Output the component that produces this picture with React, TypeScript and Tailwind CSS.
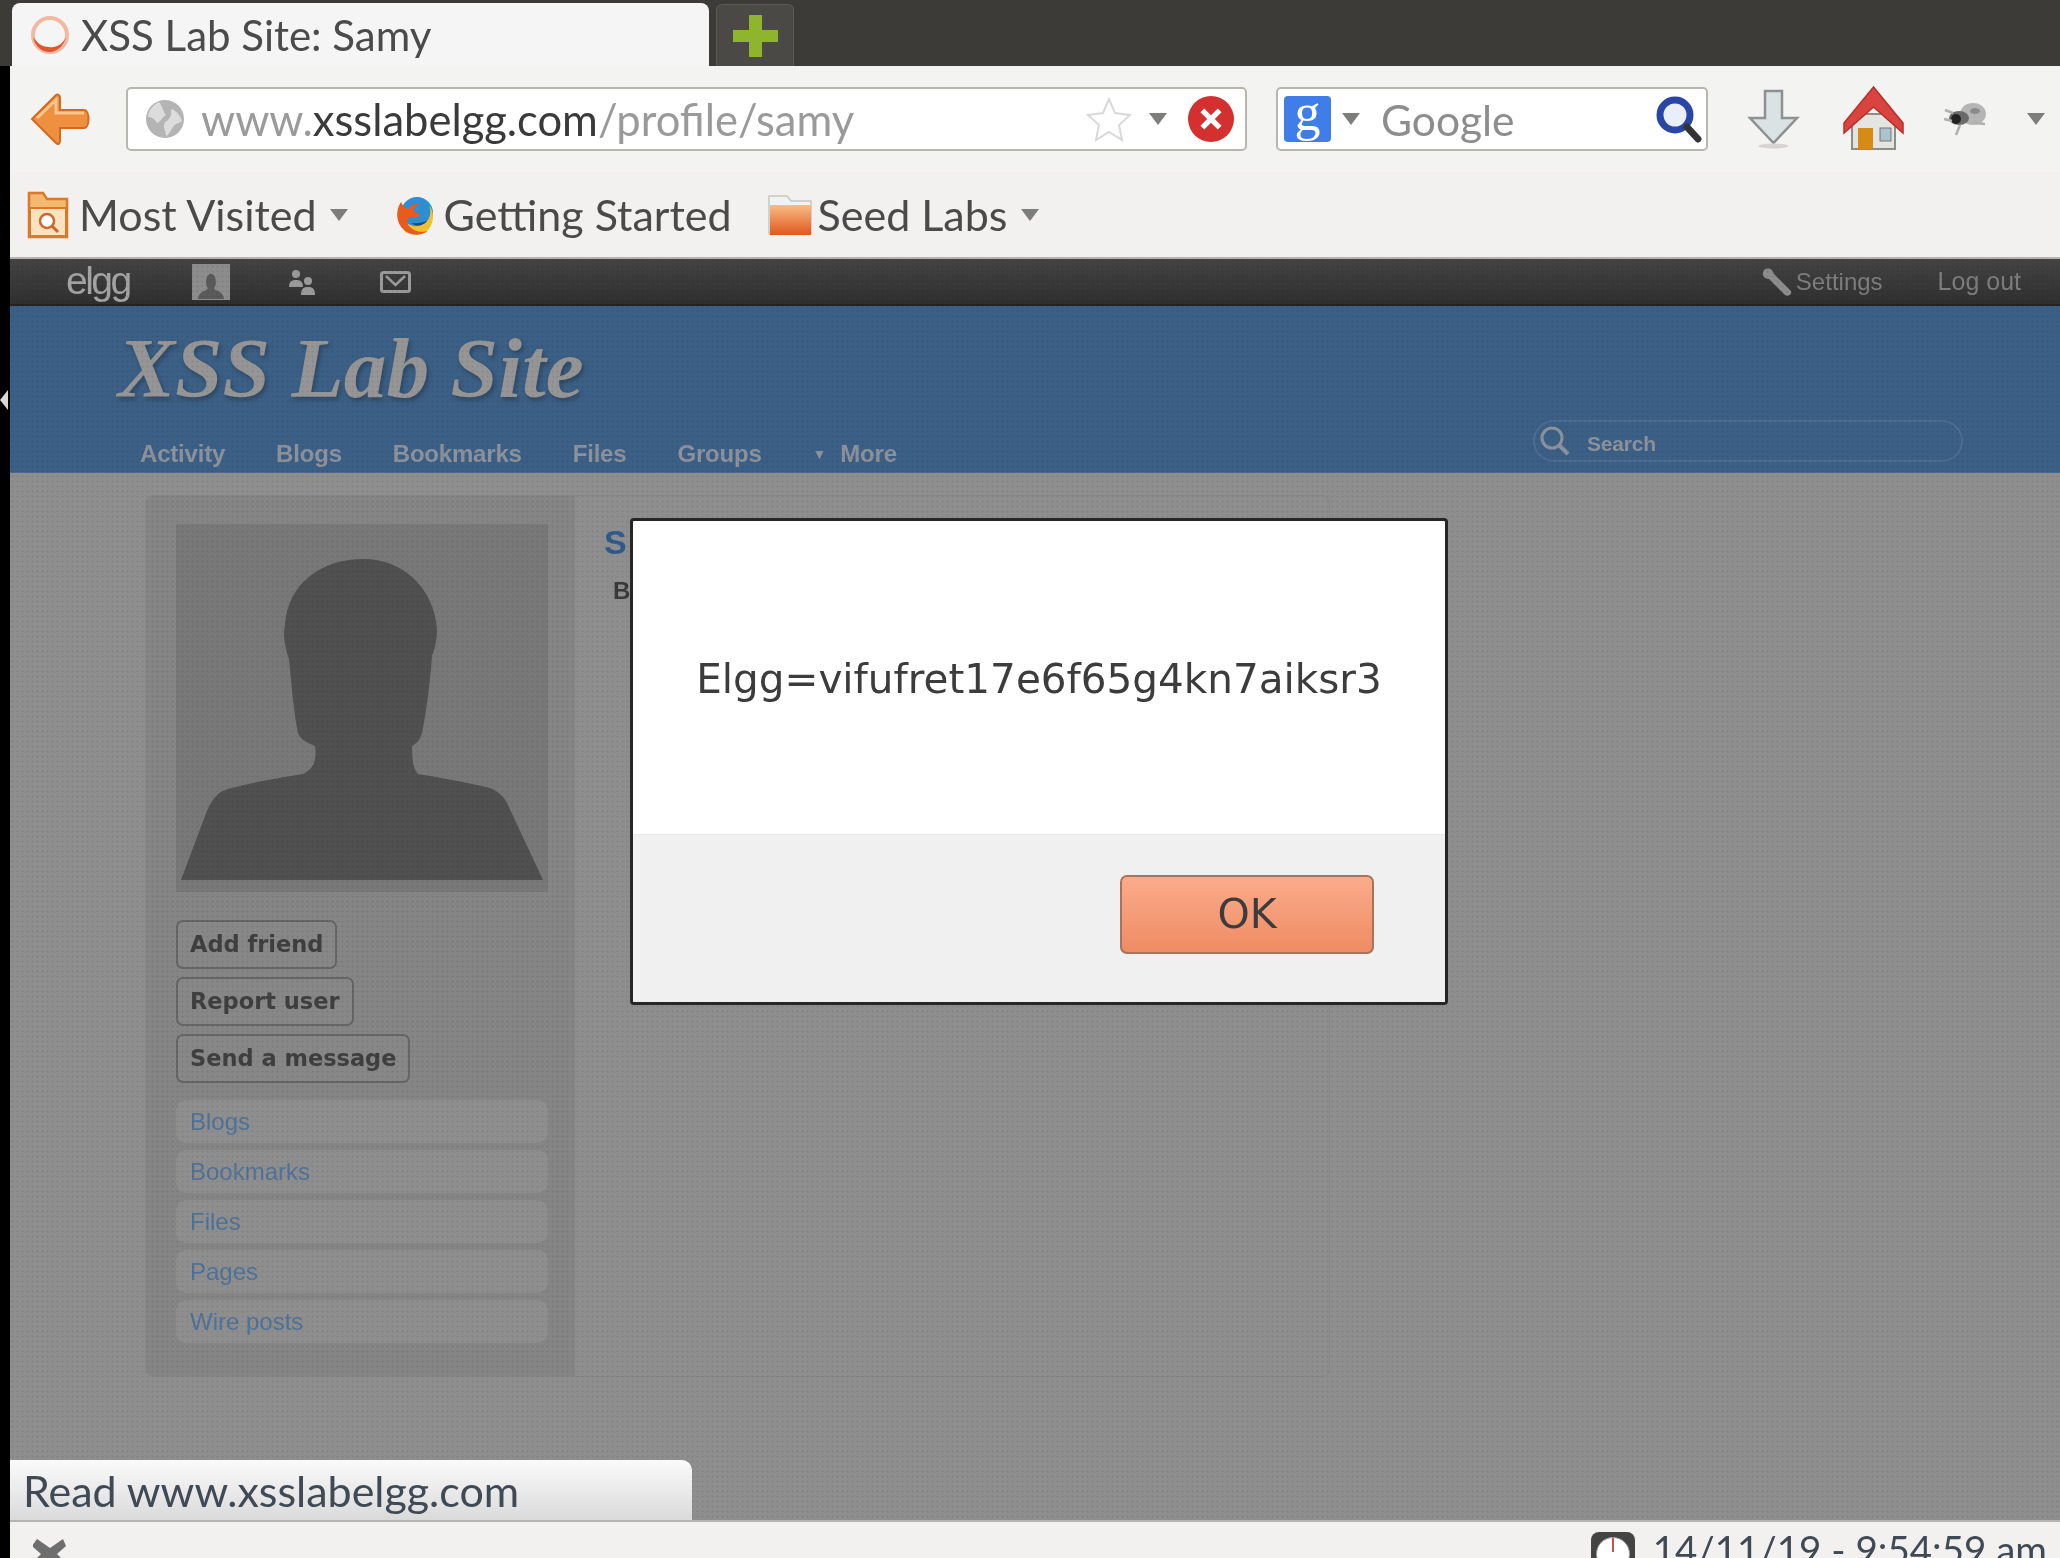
const Caret = ({ className = '' }: { className?: string }) => (
  <svg viewBox="0 0 20 14" className={`w-[20px] h-[14px] shrink-0 ${className}`}>
    <path d="M1 1h18l-9 12z" fill="#7d7d7b" />
  </svg>
);

const BackArrow = () => (
  <svg viewBox="0 0 63 53" className="w-[63px] h-[53px] shrink-0">
    <path d="M3 26 27 2c2-1 4 0 4 3v12h24c6 0 6 18 0 18H31v13c0 3-2 4-4 2z" fill="#ee9040" stroke="#d4691f" strokeWidth="2" />
    <path d="M8 25 27 7v13h28" fill="none" stroke="#f9c68d" strokeWidth="3" />
  </svg>
);

const Globe = () => (
  <svg viewBox="0 0 40 40" className="w-[40px] h-[40px] shrink-0">
    <circle cx="20" cy="20" r="19" fill="#b4b4b4" />
    <path d="M14 3c-6 3-11 9-11 15 5 0 7 3 9 6 4-1 5-6 9-8-3-3-3-8-7-13zM26 10c4 1 9 5 11 12-3 3-6 1-9 6-2 3-4 8-7 9 0-6-4-9-1-14 4-2 7-5 6-13z" fill="#dcdcdc" />
  </svg>
);

const FolderSearch = () => (
  <svg viewBox="0 0 42 48" className="w-[42px] h-[48px] shrink-0">
    <path d="M2 2h14l4 6h20v38H2z" fill="#f4b971" stroke="#d87a2a" strokeWidth="2.500" />
    <rect x="3" y="17" width="36" height="28" fill="#fbe3c0" stroke="#d87a2a" strokeWidth="2" />
    <circle cx="20" cy="30" r="7" fill="#fff" stroke="#d0662a" strokeWidth="2.500" />
    <path d="m25 35 6 6" stroke="#d0662a" strokeWidth="3" />
  </svg>
);

const Firefox = () => (
  <svg viewBox="0 0 41 44" className="w-[41px] h-[44px] shrink-0">
    <circle cx="22" cy="20" r="16" fill="#2f8ed2" />
    <path d="M12 30c6 5 16 4 21-3 3-5 3-10 1-15 6 8 5 18-1 25-7 6-17 6-24 1z" fill="#f4c02a" />
    <path d="M6 9C0 18 1 30 9 37c7 6 17 6 24 1-8 2-15 0-19-5-3-4-2-8 2-9 5 1 8 0 9-3-3-1-6-2-7-5 2-2 4-3 6-5-6 0-9 2-11 5-3-1-5-3-7-7z" fill="#e95a1c" />
    <path d="M16 30c5 4 12 3 16-2-3 1-10 3-16 2z" fill="#26447f" />
  </svg>
);

const OrangeFolder = () => (
  <svg viewBox="0 0 45 42" className="w-[45px] h-[42px] shrink-0">
    <defs>
      <linearGradient id="seedFolder" x1="0" y1="0" x2="0" y2="1">
        <stop offset="0" stopColor="#f8bd85" />
        <stop offset="1" stopColor="#e2561f" />
      </linearGradient>
    </defs>
    <path d="M1 2h18l4 5h20v33H1z" fill="#f4f2ee" stroke="#c9c6be" strokeWidth="1.500" />
    <path d="M2 11h41v30H2z" fill="url(#seedFolder)" />
  </svg>
);

const GoogleTile = () => (
  <div className="w-[47px] h-[46px] shrink-0 rounded-[4px] bg-[#3f7ee8] flex items-center justify-center font-['Liberation_Serif',serif] text-[52px] leading-none text-white pb-[12px]">
    g
  </div>
);

const Magnifier = () => (
  <svg viewBox="0 0 48 48" className="w-[48px] h-[48px] shrink-0">
    <circle cx="20" cy="20" r="15" fill="#e9eefb" stroke="#2a46a5" strokeWidth="7" />
    <path d="m32 32 11 12" stroke="#333" strokeWidth="7" strokeLinecap="round" />
  </svg>
);

const DownArrow = () => (
  <svg viewBox="0 0 53 60" className="w-[53px] h-[60px] shrink-0">
    <path d="M18 2h17v27h15L26.500 54 3 29h15z" fill="#dbe2e3" stroke="#8d9191" strokeWidth="2.500" />
    <ellipse cx="26.500" cy="57" rx="15" ry="2.500" fill="#d6d5d2" />
  </svg>
);

const Home = () => (
  <svg viewBox="0 0 63 66" className="w-[63px] h-[66px] shrink-0">
    <path d="M10 28h43v35H10z" fill="#e4e4e1" stroke="#8d8d88" strokeWidth="2" />
    <path d="M31.500 1 61 37v10L31.500 21 2 47V37z" fill="#d9453e" stroke="#b82f2a" strokeWidth="1.500" />
    <rect x="16" y="42" width="15" height="21" fill="#d58c16" />
    <rect x="38" y="42" width="11" height="13" fill="#a9c3cf" stroke="#777" />
  </svg>
);

const Bug = () => (
  <svg viewBox="0 0 45 36" className="w-[45px] h-[36px] shrink-0">
    <ellipse cx="30" cy="13" rx="13" ry="11" fill="#b5b5b5" />
    <ellipse cx="16" cy="17" rx="10" ry="7" fill="#6a6a6a" />
    <ellipse cx="13" cy="18" rx="5" ry="5" fill="#222222" />
    <ellipse cx="32" cy="10" rx="5" ry="3" fill="#8a8a8a" />
    <path d="M10 12 2 9M9 20 1 18M17 24l-4 10M32 22l10 1" stroke="#b0b0b0" strokeWidth="2.500" />
  </svg>
);

const siteMenu = ['Activity', 'Blogs', 'Bookmarks', 'Files', 'Groups'];
const ownerMenu = ['Blogs', 'Bookmarks', 'Files', 'Pages', 'Wire posts'];
const actions = ['Add friend', 'Report user', 'Send a message'];

export default function App() {
  return (
    <div className="relative w-[2060px] h-[1558px] overflow-hidden flex flex-col bg-black pl-[10px] font-['Lato',sans-serif] blur-[0.7px]">
      {/* Tab strip */}
      <div className="-ml-[10px] h-[66px] shrink-0 bg-[#3c3b37] flex items-end pl-[12px]">
        <div className="w-[697px] h-[63px] rounded-t-[8px] bg-[#f5f5f5] flex items-center pl-[16px] gap-[9px]">
          <svg viewBox="0 0 44 44" className="w-[44px] h-[44px] shrink-0">
            <circle cx="22" cy="22" r="17" fill="none" stroke="#f3b9a0" strokeWidth="4" />
            <path d="M5 24c2 10 10 16 18 15 7-1 13-7 15-15-4 8-10 11-17 10-7 0-12-4-16-10z" fill="#e2562b" />
          </svg>
          <span className="text-[42px] leading-none text-[#4b4b4b] whitespace-nowrap">XSS Lab Site: Samy</span>
        </div>
        <div className="ml-[7px] w-[78px] h-[62px] rounded-t-[6px] bg-[#4a4945] border border-b-0 border-[#5a5955] flex items-center justify-center">
          <svg viewBox="0 0 45 42" className="w-[45px] h-[42px]">
            <path d="M16 0h13v15h16v12H29v15H16V27H0V15h16z" fill="#8fb42e" />
          </svg>
        </div>
      </div>

      {/* Navigation toolbar */}
      <div className="h-[106px] shrink-0 bg-[#f3f3f2] flex items-center">
        <div className="ml-[19px]"><BackArrow /></div>
        <div className="ml-[34px] w-[1121px] h-[64px] rounded-[5px] border-2 border-[#b8b6af] bg-white flex items-center pl-[17px] pr-[11px]">
          <Globe />
          <span className="ml-[16px] pt-[2px] text-[43.500px] leading-none text-[#9a9a9a] whitespace-nowrap">
            www.<span className="text-[#3a3a3a]">xsslabelgg.com</span>/profile/samy
          </span>
          <svg viewBox="0 0 46 46" className="w-[46px] h-[46px] ml-auto shrink-0">
            <path d="m23 3 6 14 15 2-11 10 3 15-13-8-13 8 3-15L2 19l15-2z" fill="#fff" stroke="#d9d9d9" strokeWidth="2" />
          </svg>
          <Caret className="ml-[16px]" />
          <div className="ml-[20px] w-[46px] h-[46px] rounded-full bg-[#d3302f] flex items-center justify-center shrink-0">
            <svg viewBox="0 0 24 24" className="w-[26px] h-[26px]">
              <path d="m4 4 16 16M20 4 4 20" stroke="#fff" strokeWidth="5" />
            </svg>
          </div>
        </div>
        <div className="ml-[29px] w-[432px] h-[64px] rounded-[5px] border-2 border-[#b8b6af] bg-white flex items-center pl-[6px] pr-[3px]">
          <GoogleTile />
          <Caret className="ml-[10px]" />
          <span className="ml-[20px] pt-[2px] text-[42.500px] leading-none text-[#8d8d8d]">Google</span>
          <div className="ml-auto"><Magnifier /></div>
        </div>
        <div className="ml-[39px]"><DownArrow /></div>
        <div className="ml-[42px]"><Home /></div>
        <div className="ml-[38px]"><Bug /></div>
        <Caret className="ml-[38px]" />
      </div>

      {/* Bookmarks toolbar */}
      <div className="h-[87px] shrink-0 bg-[#f2f1f0] border-b-2 border-[#b4b3b0] flex items-center text-[43px] leading-none text-[#4a4a4a] whitespace-nowrap">
        <div className="ml-[17px]"><FolderSearch /></div>
        <span className="ml-[10px]">Most Visited</span>
        <Caret className="ml-[12px]" />
        <div className="ml-[46px]"><Firefox /></div>
        <span className="ml-[8px]">Getting Started</span>
        <div className="ml-[36px]"><OrangeFolder /></div>
        <span className="ml-[5px]">Seed Labs</span>
        <Caret className="ml-[13px]" />
      </div>

      {/* Elgg top bar */}
      <div className="h-[47px] shrink-0 bg-gradient-to-b from-[#444444] to-[#2f2f2f] border-b-2 border-[#232323] flex items-center font-['Liberation_Sans',sans-serif] text-[#7d7d7d]">
        <span className="ml-[56px] w-[66px] text-[39px] leading-none tracking-[-2.500px] text-[#a3a3a3] pb-[3px]">elgg</span>
        <div className="ml-[60px] w-[38px] h-[36px] bg-[#8c8c8c] flex items-end justify-center overflow-hidden">
          <svg viewBox="0 0 30 32" className="w-[28px] h-[32px]">
            <path d="M1 32c1-7 6-8 10-10 1-2 0-3-1-5-1-6 1-12 5-12s6 6 5 12c-1 2-2 3-1 5 4 2 9 3 10 10z" fill="#5a5a5a" />
          </svg>
        </div>
        <svg viewBox="0 0 30 26" className="ml-[57px] w-[30px] h-[26px]">
          <circle cx="9" cy="5" r="4" fill="#9a9a9a" />
          <path d="M2 18c0-6 3-7 7-7s7 1 7 7z" fill="#9a9a9a" />
          <circle cx="21" cy="12" r="4" fill="#9a9a9a" />
          <path d="M14 26c0-7 3-8 7-8s7 1 7 8z" fill="#9a9a9a" />
        </svg>
        <svg viewBox="0 0 31 22" className="ml-[63px] w-[31px] h-[22px]">
          <rect x="1.500" y="1.500" width="28" height="19" rx="2" fill="none" stroke="#9a9a9a" strokeWidth="3" />
          <path d="m6 5 9.500 9L25 5" fill="none" stroke="#9a9a9a" strokeWidth="2.500" />
        </svg>
        <svg viewBox="0 0 33 30" className="ml-auto w-[33px] h-[30px]">
          <path d="M3 3c4-3 9-1 10 4l17 17c1 4-3 6-6 4L8 12C3 12 0 8 3 3z" fill="#8c8c8c" />
        </svg>
        <span className="ml-[2px] text-[24px]">Settings</span>
        <span className="ml-[55px] mr-[39px] text-[25px]">Log out</span>
      </div>

      {/* Site header */}
      <div className="h-[167px] shrink-0 bg-[#3c5f85] border-b border-[#4a6a8c] flex flex-col">
        <div className="pl-[108px] pt-[20px] font-['Liberation_Serif',serif] font-bold italic text-[85.500px] leading-none text-[#959595] [text-shadow:2px_3px_4px_#2f4863]">
          XSS Lab Site
        </div>
        <div className="flex-1 flex items-end justify-between font-['Liberation_Sans',sans-serif] font-bold text-[24px] leading-[28px] tracking-[-0.2px] text-[#8c929b]">
          <div className="flex items-center pl-[130px] pb-[4px] gap-[51px]">
            {siteMenu.map((item) => (
              <span key={item}>{item}</span>
            ))}
            <span className="flex items-center gap-[14px]">
              <span className="text-[14px]">▼</span>
              More
            </span>
          </div>
          <div className="mr-[97px] mb-[10px] w-[430px] h-[42px] rounded-[21px] border-2 border-[#4c6d90] flex items-center pl-[4px] text-[#8c929b]">
            <svg viewBox="0 0 32 32" className="w-[32px] h-[32px]">
              <circle cx="13" cy="13" r="10" fill="none" stroke="#8c929b" strokeWidth="3" />
              <path d="m20 20 9 9" stroke="#8c929b" strokeWidth="4" />
            </svg>
            <span className="ml-[16px] pt-[6px] text-[21px]">Search</span>
          </div>
        </div>
      </div>

      {/* Page body under the alert backdrop */}
      <div className="flex-1 bg-[#8e8e8e] pl-[135px] pt-[22px] font-['Liberation_Sans',sans-serif]">
        <div className="w-[1185px] h-[882px] rounded-[8px] border border-[#878787] flex overflow-hidden">
          <div className="w-[429px] shrink-0 bg-[#858585] pl-[30px] pr-[26px] pt-[28px]">
            <div className="w-[372px] h-[368px] bg-[#787878] overflow-hidden">
              <svg viewBox="0 0 372 368" className="w-[372px] h-[368px]">
                <path
                  d="M5 356 29 292C34 278 40 270 47 267 57 262 100 254 127 250 137 245 141 238 139 222 130 218 124 215 122 209 118 190 116 165 113 135 108 120 107 110 109 100 112 60 145 35 187 35 228 35 258 65 261 105 261 115 259 125 256 132 254 160 250 190 246 209 244 216 240 220 236 222 236 235 237 245 242 250 260 253 290 258 314 264 322 267 328 273 331 279L367 356Z"
                  fill="#505050"
                />
              </svg>
            </div>
            <div className="mt-[28px] flex flex-col items-start gap-[8px]">
              {actions.map((label) => (
                <div
                  key={label}
                  className="h-[49px] px-[12px] rounded-[7px] border-2 border-[#666666] bg-[#878787] flex items-center font-['DejaVu_Sans',sans-serif] font-bold text-[22.500px] leading-none text-[#3f3f3f] whitespace-nowrap"
                >
                  {label}
                </div>
              ))}
            </div>
            <div className="mt-[17px] w-[372px] flex flex-col gap-[7px]">
              {ownerMenu.map((label) => (
                <div key={label} className="h-[43px] rounded-[10px] bg-[#8e8e8e] pl-[14px] flex items-center text-[24px] leading-none text-[#4f7298]">
                  {label}
                </div>
              ))}
            </div>
          </div>
          <div className="flex-1 pl-[29px] pt-[27px]">
            <div className="text-[34px] leading-[38px] tracking-[5px] font-bold text-[#2f5a8b]">Samy</div>
            <div className="mt-[15px] pl-[9px] text-[24px] leading-[30px] tracking-[6px] font-bold text-[#3a3a3a]">Brief</div>
          </div>
        </div>
      </div>

      {/* Status bar */}
      <div className="h-[38px] shrink-0 bg-[#f2f1f0] border-t-2 border-[#b3b2af] flex overflow-hidden">
        <svg viewBox="0 0 34 34" className="ml-[23px] mt-[14px] w-[34px] h-[34px] shrink-0">
          <path d="M4 3 17 12 30 3l3 7-9 8 9 9-5 6-12-9-12 9-5-6 9-9-9-8z" fill="#6e6e6e" />
        </svg>
        <div className="ml-auto mt-[10px] w-[44px] h-[44px] rounded-[8px] bg-[#444444] flex items-center justify-center shrink-0">
          <div className="w-[34px] h-[34px] rounded-full bg-white border border-[#999999] flex justify-center">
            <div className="w-[2px] h-[14px] bg-[#c9524a]" />
          </div>
        </div>
        <span className="ml-[18px] mr-[13px] mt-[8px] text-[38.500px] leading-none text-[#3f4a55] whitespace-nowrap">14/11/19 - 9:54:59 am</span>
      </div>

      {/* Backdrop dither */}
      <div className="absolute left-[10px] right-0 top-[259px] bottom-[38px] pointer-events-none opacity-10 bg-[radial-gradient(#000000_25%,transparent_30%)] bg-[length:5px_5px]" />

      {/* Sidebar collapse notch on the window edge */}
      <div className="absolute left-0 top-[390px] w-0 h-0 border-y-[10px] border-y-transparent border-r-[8px] border-r-[#d8d8d8]" />

      {/* Link status tooltip */}
      <div className="absolute left-[10px] top-[1460px] w-[682px] h-[60px] rounded-tr-[10px] bg-gradient-to-b from-[#fbfbfb] to-[#dadada] flex items-center pl-[13px] text-[43px] leading-none text-[#3f4a55] whitespace-nowrap">
        Read www.xsslabelgg.com
      </div>

      {/* Alert dialog */}
      <div className="absolute left-[630px] top-[518px] w-[818px] h-[487px] rounded-[4px] border-[3px] border-[#262626] bg-white flex flex-col overflow-hidden">
        <div className="flex-1 flex items-center justify-center pt-[4px] font-['DejaVu_Sans',sans-serif] text-[40.500px] leading-none text-[#3c3c3c]">
          Elgg=vifufret17e6f65g4kn7aiksr3
        </div>
        <div className="h-[168px] shrink-0 bg-[#f0f0f0] border-t border-[#e8e8e8] flex items-center justify-end pr-[71px] pb-[8px]">
          <div className="w-[254px] h-[79px] rounded-[7px] border-2 border-[#a8735a] bg-gradient-to-b from-[#fbab8b] to-[#ee8c63] flex items-center justify-center font-['DejaVu_Sans',sans-serif] text-[41px] leading-none text-[#3c3c3c]">
            OK
          </div>
        </div>
      </div>
    </div>
  );
}
